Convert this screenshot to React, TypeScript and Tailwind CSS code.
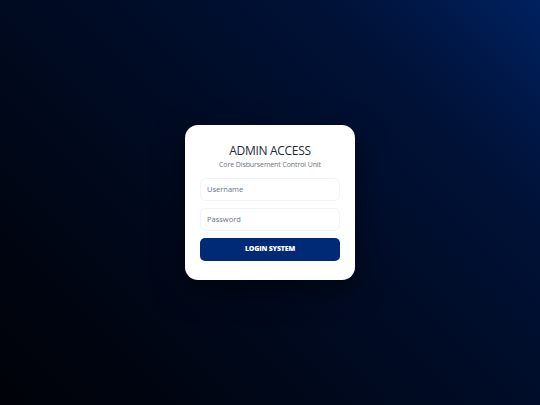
import React from "react";

export default function App() {
  return (
    <div
      className="w-[540px] h-[405px] flex items-center justify-center bg-[linear-gradient(225deg,#00215f_0%,#001238_22%,#000b24_50%,#00040f_85%,#000208_100%)]"
      style={{ fontFamily: "'Open Sans', 'Noto Sans', sans-serif" }}
    >
      <div className="w-[170px] bg-white rounded-[13px] px-[15px] pt-[18px] pb-[19px] shadow-[0_10px_30px_rgba(0,0,0,0.5)] flex flex-col">
        <h1 className="text-center text-[12px] leading-[16px] tracking-[-0.3px] text-[#1e293b] font-normal">
          ADMIN ACCESS
        </h1>
        <p className="text-center text-[7px] leading-[9px] text-[#6b7280] mt-[1px] tracking-[-0.1px]">
          Core Disbursement Control Unit
        </p>
        <div className="mt-[9px] flex flex-col gap-[7px]">
          <div className="h-[23px] rounded-[6px] border border-[#f1f3f6] flex items-center px-[6px] text-[7.5px] text-[#6b7280]">
            Username
          </div>
          <div className="h-[23px] rounded-[6px] border border-[#f1f3f6] flex items-center px-[6px] text-[7.5px] text-[#6b7280]">
            Password
          </div>
          <button className="h-[23px] rounded-[5px] bg-[#002a75] text-white text-[7px] font-extrabold tracking-[-0.2px] flex items-center justify-center">
            LOGIN SYSTEM
          </button>
        </div>
      </div>
    </div>
  );
}
